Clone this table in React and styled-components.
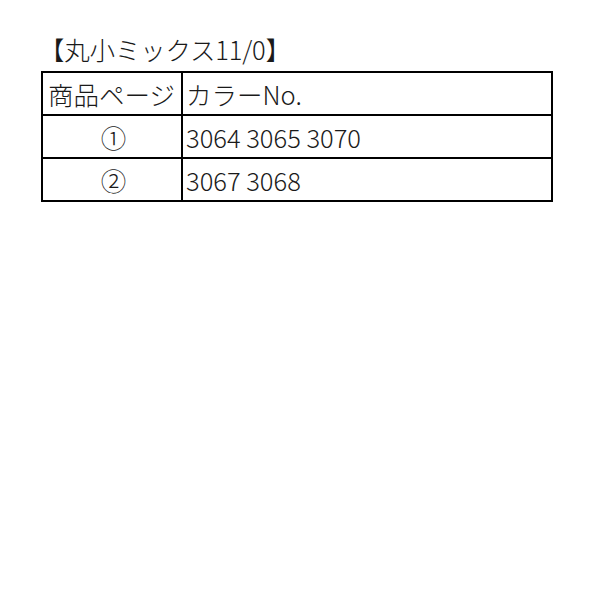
import styled, { createGlobalStyle } from 'styled-components';

const Global = createGlobalStyle`
  body {
    margin: 0;
    background: #fff;
    font-family: "Noto Sans CJK JP", "Noto Sans", sans-serif;
    color: #1a1a1a;
  }
`;

const Page = styled.div`
  padding: 33px 0 0 41px;
`;

const Title = styled.div`
  font-size: 25.5px;
  font-weight: 300;
  line-height: 32px;
  height: 32px;
  margin: 0 0 6px -2px;
  letter-spacing: -0.2px;
`;

const Table = styled.table`
  border-collapse: collapse;
  width: 512px;
  table-layout: fixed;
  td {
    border: 2px solid #000;
    height: 41px;
    font-size: 25.5px;
    font-weight: 300;
    line-height: 41px;
    white-space: nowrap;
    overflow: hidden;
  }
`;

const Cell = styled.td`
  text-align: ${p => (p.$center ? 'center' : 'left')};
  width: ${p => p.$w || 'auto'};
  padding: 0 0 0 ${p => p.$pad || '3px'};
`;

const rows = [
  ['①', '3064 3065 3070'],
  ['②', '3067 3068'],
];

export default function App() {
  return (
    <Page>
      <Global />
      <Title>【丸小ミックス11/0】</Title>
      <Table>
        <tbody>
          <tr>
            <Cell $w="133px" $pad="5px">商品ページ</Cell>
            <Cell>カラーNo.</Cell>
          </tr>
          {rows.map((r, i) => (
            <tr key={i}>
              <Cell $center>{r[0]}</Cell>
              <Cell>{r[1]}</Cell>
            </tr>
          ))}
        </tbody>
      </Table>
    </Page>
  );
}
